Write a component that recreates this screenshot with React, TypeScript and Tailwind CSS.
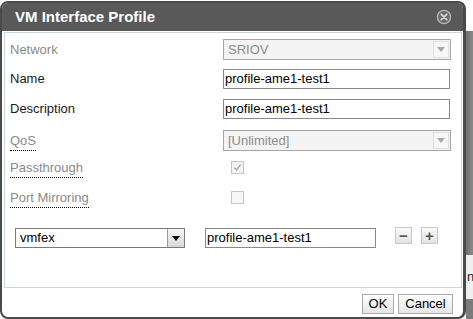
import React from "react";

function CloseIcon() {
  return (
    <svg width="16" height="16" viewBox="0 0 16 16">
      <circle cx="8" cy="8" r="6.6" fill="#6a6a6a" stroke="#b4b4b4" strokeWidth="1.4" />
      <path d="M5.3 5.3 L10.7 10.7 M10.7 5.3 L5.3 10.7" stroke="#d8d8d8" strokeWidth="1.8" strokeLinecap="round" />
    </svg>
  );
}

function Arrow({ color }: { color: string }) {
  return (
    <svg width="8" height="5" viewBox="0 0 8 5">
      <path d="M0 0 H8 L4 5 Z" fill={color} />
    </svg>
  );
}

function DisabledSelect({ value }: { value: string }) {
  return (
    <div className="flex h-[21px] w-[228px] items-stretch border border-[#a6a6a6] bg-[#f4f4f4]">
      <div className="flex flex-1 items-center pl-[4px] text-[#8c8c8c]">{value}</div>
      <div className="my-[1px] mr-[1px] flex w-[16px] items-center justify-center border border-[#dedede] bg-[#f7f7f7]">
        <Arrow color="#a9a9a9" />
      </div>
    </div>
  );
}

function TextBox({ value, w }: { value: string; w: string }) {
  return (
    <div className={`flex h-[20px] items-center border border-[#8a8a8a] bg-white pl-[1px] text-black ${w}`}>
      {value}
    </div>
  );
}

function Label({ text, muted, dotted }: { text: string; muted?: boolean; dotted?: boolean }) {
  return (
    <div className="w-[218px] shrink-0 pl-[5px]">
      <span
        className={`${muted ? "text-[#8a8a8a]" : "text-[#1a1a1a]"} ${
          dotted ? "border-b border-dotted border-black pb-[2px]" : ""
        }`}
      >
        {text}
      </span>
    </div>
  );
}

function SmallButton({ children }: { children: React.ReactNode }) {
  return (
    <div className="flex h-[17px] w-[17px] items-center justify-center border border-[#c8c8c8] bg-gradient-to-b from-[#fbfbfb] to-[#e2e2e2] text-[15px] font-bold leading-none text-[#555]">
      {children}
    </div>
  );
}

export default function App() {
  return (
    <div className="flex h-[319px] w-[473px] overflow-hidden bg-white font-['Liberation_Sans',Arial,sans-serif] text-[13px]">
      <div className="mt-[1px] flex h-[318px] w-[466px] shrink-0 flex-col overflow-hidden rounded-[8px] border-2 border-r-[3px] border-[#4a4a4a] bg-white">
        <div className="flex h-[28px] shrink-0 items-center justify-between bg-[#595959] pl-[13px] pr-[11px]">
          <span className="text-[15px] font-bold text-white">VM Interface Profile</span>
          <CloseIcon />
        </div>

        <div className="mt-[1px] ml-[2px] mr-[1px] flex h-[256px] shrink-0 flex-col border border-[#c8d4dd]">
          <div className="mt-[6px] flex h-[21px] items-center">
            <Label text="Network" muted />
            <DisabledSelect value="SRIOV" />
          </div>
          <div className="mt-[9px] flex h-[20px] items-center">
            <Label text="Name" />
            <TextBox value="profile-ame1-test1" w="w-[227px]" />
          </div>
          <div className="mt-[10px] flex h-[20px] items-center">
            <Label text="Description" />
            <TextBox value="profile-ame1-test1" w="w-[227px]" />
          </div>
          <div className="mt-[11px] flex h-[21px] items-center">
            <Label text="QoS" muted dotted />
            <DisabledSelect value="[Unlimited]" />
          </div>
          <div className="mt-[10px] flex h-[13px] items-center">
            <Label text="Passthrough" muted dotted />
            <div className="ml-[8px] flex h-[13px] w-[13px] items-center justify-center border border-[#c4c4c4] bg-[#f3f3f3]">
              <svg width="9" height="9" viewBox="0 0 9 9">
                <path d="M1.5 4.8 L3.6 7 L7.6 1.6" fill="none" stroke="#a8a8a8" strokeWidth="1.4" />
              </svg>
            </div>
          </div>
          <div className="mt-[17px] flex h-[13px] items-center">
            <Label text="Port Mirroring" muted dotted />
            <div className="ml-[8px] h-[13px] w-[13px] border border-[#c4c4c4] bg-[#f6f6f6]" />
          </div>
          <div className="mt-[24px] ml-[10px] flex h-[20px] items-start">
            <div className="flex h-[20px] w-[170px] items-stretch border border-[#7a7a7a] bg-white">
              <div className="flex flex-1 items-center pl-[4px] text-black">vmfex</div>
              <div className="flex w-[17px] items-center justify-center border-l border-[#9a9a9a] bg-gradient-to-b from-[#f6f6f6] to-[#d8d8d8]">
                <Arrow color="#111" />
              </div>
            </div>
            <div className="ml-[20px]">
              <TextBox value="profile-ame1-test1" w="w-[171px]" />
            </div>
            <div className="-mt-[1px] ml-[19px] flex gap-[9px]">
              <SmallButton>−</SmallButton>
              <SmallButton>+</SmallButton>
            </div>
          </div>
        </div>

        <div className="flex justify-end gap-[4px] pt-[6px] pr-[10px]">
          <div className="flex h-[20px] w-[32px] items-center justify-center border border-[#a9a9a9] bg-gradient-to-b from-[#ffffff] to-[#e6e6e6] text-black">
            OK
          </div>
          <div className="flex h-[20px] w-[55px] items-center justify-center border border-[#a9a9a9] bg-gradient-to-b from-[#ffffff] to-[#e6e6e6] text-black">
            Cancel
          </div>
        </div>
      </div>

      <div className="flex flex-1 flex-col">
        <div className="h-[31px] bg-white" />
        <div className="h-[224px] bg-gradient-to-r from-[#6f6f6f] to-[#8c8c8c]" />
        <div className="flex h-[44px] items-center overflow-hidden bg-[#efefef] pl-[1px] text-[13px] text-[#222]">
          n
        </div>
        <div className="flex-1 bg-[#7b7b7b]" />
      </div>
    </div>
  );
}
